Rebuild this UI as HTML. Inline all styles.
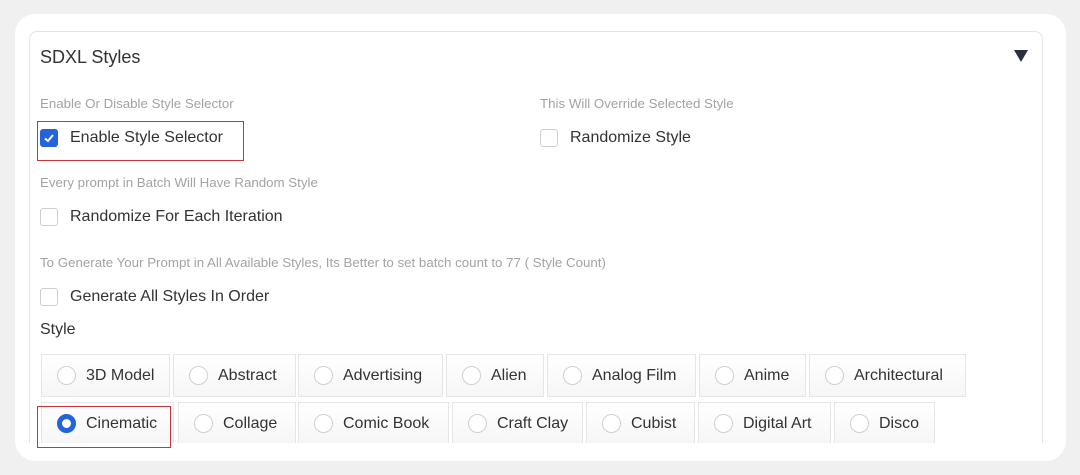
<!DOCTYPE html><html><head><style>
*{box-sizing:border-box;margin:0;padding:0}
body{width:1080px;height:475px;background:#f0f0f0;font-family:"Liberation Sans",sans-serif;position:relative;overflow:hidden}
.card{position:absolute;left:15px;top:14px;width:1051px;height:447px;background:#fff;border-radius:20px}
.clip{position:absolute;left:29px;top:31px;width:1014px;height:412px;overflow:hidden}
.panel{position:absolute;left:0;top:0;width:1014px;height:440px;border:1px solid #e3e3e3;border-radius:8px}
.t{position:absolute;white-space:nowrap}
.lab{color:#a3a3a3;font-size:13.3px}
.txt{color:#333;font-size:16px}
.cb{position:absolute;width:18px;height:18px;border:1px solid #cfcfcf;border-radius:3px;background:#fff}
.b{position:absolute;height:43px;border:1px solid #e6e6e6;background:linear-gradient(#fff,#f6f6f6);color:#333;font-size:16px;line-height:41px;white-space:nowrap}
.b i{position:absolute;left:15px;top:11px;width:19px;height:19px;border:1px solid #d0d0d0;border-radius:50%;background:#fff}
.b span{position:absolute;left:44px}
</style></head><body>
<div class="card"></div>
<div class="clip"><div class="panel"></div>
<div class="t" style="left:11px;top:16px;font-size:18px;color:#333">SDXL Styles</div>
<svg style="position:absolute;left:985px;top:18px" width="14" height="14"><path d="M0 1H14L7 13Z" fill="#2b3040"/></svg>
<div class="t lab" style="left:11px;top:65px">Enable Or Disable Style Selector</div>
<div class="cb" style="left:11px;top:98px;background:#2563d9;border-color:#2563d9"><svg width="16" height="16" style="position:absolute;left:0;top:0"><path d="M4 8.5L7 11L12 5" stroke="#fff" stroke-width="2" fill="none"/></svg></div>
<div class="t txt" style="left:41px;top:98px">Enable Style Selector</div>
<div style="position:absolute;left:8px;top:90px;width:207px;height:40px;border:1.5px solid #c9333a"></div>
<div class="t lab" style="left:511px;top:65px">This Will Override Selected Style</div>
<div class="cb" style="left:511px;top:98px"></div>
<div class="t txt" style="left:541px;top:98px">Randomize Style</div>
<div class="t lab" style="left:11px;top:144px">Every prompt in Batch Will Have Random Style</div>
<div class="cb" style="left:11px;top:177px"></div>
<div class="t txt" style="left:41px;top:177px">Randomize For Each Iteration</div>
<div class="t lab" style="left:11px;top:224px">To Generate Your Prompt in All Available Styles, Its Better to set batch count to 77 ( Style Count)</div>
<div class="cb" style="left:11px;top:257px"></div>
<div class="t txt" style="left:41px;top:257px">Generate All Styles In Order</div>
<div class="t txt" style="left:11px;top:290px">Style</div>
<div class="b" style="left:12px;top:323px;width:129px"><i></i><span>3D Model</span></div>
<div class="b" style="left:144px;top:323px;width:123px"><i></i><span>Abstract</span></div>
<div class="b" style="left:269px;top:323px;width:145px"><i></i><span>Advertising</span></div>
<div class="b" style="left:417px;top:323px;width:98px"><i></i><span>Alien</span></div>
<div class="b" style="left:518px;top:323px;width:149px"><i></i><span>Analog Film</span></div>
<div class="b" style="left:670px;top:323px;width:107px"><i></i><span>Anime</span></div>
<div class="b" style="left:780px;top:323px;width:157px"><i></i><span>Architectural</span></div>
<div class="b" style="left:12px;top:371px;width:133px"><i style="border:5px solid #2563d9;background:#fff;left:15px"></i><span>Cinematic</span></div>
<div class="b" style="left:149px;top:371px;width:118px"><i></i><span>Collage</span></div>
<div class="b" style="left:269px;top:371px;width:151px"><i></i><span>Comic Book</span></div>
<div class="b" style="left:423px;top:371px;width:131px"><i></i><span>Craft Clay</span></div>
<div class="b" style="left:557px;top:371px;width:109px"><i></i><span>Cubist</span></div>
<div class="b" style="left:669px;top:371px;width:133px"><i></i><span>Digital Art</span></div>
<div class="b" style="left:805px;top:371px;width:101px"><i></i><span>Disco</span></div>
</div>
<div style="position:absolute;left:37px;top:406px;width:134px;height:42px;border:1.5px solid #c9333a"></div>
</body></html>
